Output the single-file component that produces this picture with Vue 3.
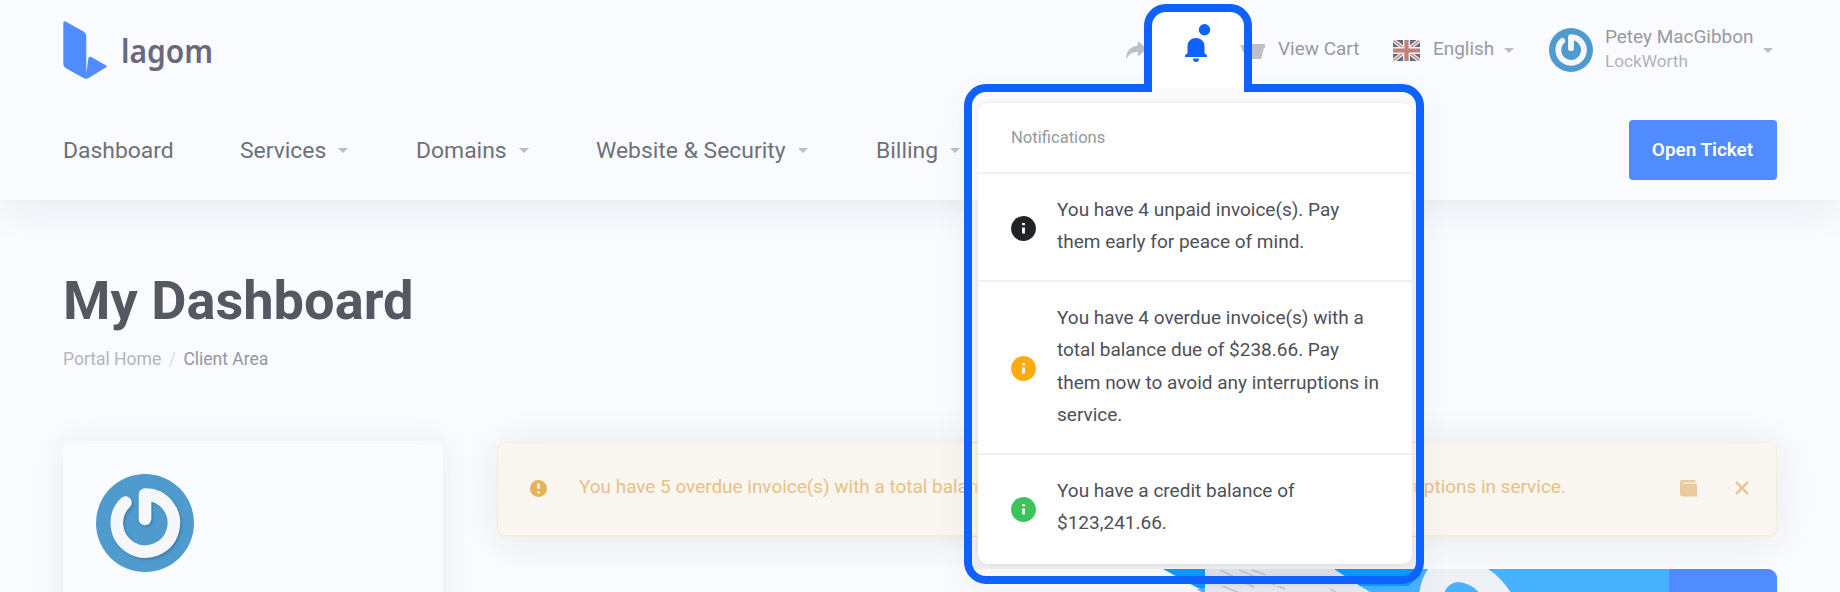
<script setup>
const nav = [
  { label: 'Dashboard', cls: 'n-dash' },
  { label: 'Services', cls: 'n-serv', caret: true },
  { label: 'Domains', cls: 'n-dom', caret: true },
  { label: 'Website & Security', cls: 'n-web', caret: true },
  { label: 'Billing', cls: 'n-bill', caret: true },
]
const notes = [
  { color: '#212427', lines: ['You have 4 unpaid invoice(s). Pay', 'them early for peace of mind.'] },
  { color: '#ffab0d', lines: ['You have 4 overdue invoice(s) with a', 'total balance due of $238.66. Pay', 'them now to avoid any interruptions in', 'service.'] },
  { color: '#3dc35c', lines: ['You have a credit balance of', '$123,241.66.'] },
]
</script>

<template>
  <div class="page">
    <header class="header">
      <div class="top">
        <svg class="logo" width="160" height="72" viewBox="60 14 160 72">
          <path fill="#508bff" d="M63.3 23.5Q63.3 20.3 66 21.8L83.500 31.500Q86.300 33.200 86.300 36V73.500L88.300 58.500Q88.800 55.700 91.200 57.100L105.800 65.200Q107.800 66.300 105.800 67.600L88.500 78Q86 79.400 83.500 78L65.500 68Q63.300 66.600 63.300 64Z" />
          <text x="121" y="62.500" class="logo-text" textLength="92" lengthAdjust="spacingAndGlyphs">lagom</text>
        </svg>
        <div class="tools">
          <svg class="share" width="22" height="20" viewBox="0 0 22 20"><path fill="#bcc0c8" d="M12 1 21 9 12 16.500V12C6 12 3 14.500 0 19 0 11 5 6 12 5.500Z" /></svg>
          <svg class="cart" width="25" height="24" viewBox="0 0 25 24"><path fill="#bcc0c8" d="M0 6H4V1H6V6H25V10H24L21 21H5L2 10H0Z" /></svg>
          <span class="t16 view">View Cart</span>
          <svg class="flag" width="27" height="21" viewBox="0 0 27 21">
            <defs><clipPath id="flagclip"><rect width="27" height="21" rx="3" /></clipPath></defs>
            <g clip-path="url(#flagclip)">
              <rect width="27" height="21" fill="#5f6c92" />
              <path d="M0 0 27 21M27 0 0 21" stroke="#f4f0f2" stroke-width="4" />
              <path d="M0 0 27 21M27 0 0 21" stroke="#c98679" stroke-width="1.400" />
              <path d="M13.500 0V21M0 10.500H27" stroke="#f4f0f2" stroke-width="7" />
              <path d="M13.500 0V21M0 10.500H27" stroke="#c18278" stroke-width="4.200" />
            </g>
          </svg>
          <span class="t16 lang">English</span>
          <i class="caret"></i>
          <svg class="avatar-s" width="44" height="44" viewBox="0 0 98 98">
            <circle cx="49" cy="49" r="49" fill="#4f9bce" />
            <path d="M29.500 28.500A28.500 28.500 0 1 0 49 20.500V45" fill="none" stroke="#f5f7fb" stroke-width="13" stroke-linecap="round" stroke-linejoin="round" />
          </svg>
          <div class="who"><span class="t16 name">Petey MacGibbon</span><span class="company">LockWorth</span></div>
          <i class="caret"></i>
        </div>
      </div>
      <nav class="nav">
        <a v-for="n in nav" :key="n.label" :class="['nav-item', n.cls]"><span>{{ n.label }}</span><i v-if="n.caret" class="caret"></i></a>
        <button class="ticket">Open Ticket</button>
      </nav>
    </header>

    <main class="main">
      <h1>My Dashboard</h1>
      <div class="crumbs"><span>Portal Home</span><span class="slash">/</span><span class="here">Client Area</span></div>
      <div class="cols">
        <section class="profile">
          <svg width="98" height="98" viewBox="0 0 98 98">
            <defs>
              <filter id="soft" x="-20%" y="-20%" width="140%" height="140%"><feDropShadow dx="1.500" dy="1.500" stdDeviation="1.200" flood-color="#28567a" flood-opacity=".45" /></filter>
            </defs>
            <circle cx="49" cy="49" r="49" fill="#4f9bce" />
            <path filter="url(#soft)" d="M29.500 28.500A28.500 28.500 0 1 0 49 20.500V45" fill="none" stroke="#f5f7fb" stroke-width="12.500" stroke-linecap="round" stroke-linejoin="round" />
          </svg>
        </section>
        <div class="right">
          <section class="alert">
            <svg class="warn" width="17" height="17" viewBox="0 0 17 17"><circle cx="8.500" cy="8.500" r="8.500" fill="#e5b45a" /><path d="M8.500 3.500V8.800M8.500 11.200V13.500" stroke="#faf6f1" stroke-width="2.400" /></svg>
            <span class="alert-text">You have 5 overdue invoice(s) with a total balance due of $238.66. Pay them now to avoid any interruptions in service.</span>
            <svg class="wallet" width="17" height="17" viewBox="0 0 17 17"><path fill="#ebcb9c" d="M2.500 0H15.500V2.500H3V3.700H17V16.500H2.500Q0 16.500 0 14V2.500Q0 0 2.500 0Z" /></svg>
            <svg class="close" width="14" height="14" viewBox="0 0 14 14"><path d="M1 1 13 13M13 1 1 13" stroke="#e8c896" stroke-width="2.500" /></svg>
          </section>
          <section class="banner">
            <svg width="1280" height="40" viewBox="497 569 1280 40">
              <rect x="1205" y="569" width="160" height="40" fill="#e8edf4" />
              <path d="M1163 569H1205V594Z" fill="#48b2ff" />
              <path d="M1334 569H1669V609H1396Z" fill="#48b2ff" />
              <rect x="1669" y="569" width="120" height="40" fill="#508bff" />
              <path d="M1220 570 1254 587M1239 570 1285 589M1220 585 1242 594M1256 570 1270 575M1330 589 1337 593" stroke="#c9cdd4" stroke-width="2" />
              <path d="M1419 594Q1421 579 1428 569H1488Q1500 576 1512 594H1480Q1472 583 1458 582 1447 583 1444 594Z" fill="#edf0f5" />
            </svg>
          </section>
        </div>
      </div>
    </main>

    <div class="glow"></div>
    <svg class="inside" width="1840" height="592" viewBox="0 0 1840 592">
      <path d="M1148 94V26A18 18 0 0 1 1166 8H1230A18 18 0 0 1 1248 26V94Z" fill="#fff" />
      <path d="M1240 45H1246V55L1243 52Z" fill="#c4c7cd" />
      <path d="M968 106A18 18 0 0 1 986 88H1402A18 18 0 0 1 1420 106V200H968Z" fill="#fafafb" />
      <path d="M968 200H1420V442H968Z" fill="#f0f1f3" />
      <path d="M968 442H1420V537H968Z" fill="#f5ecc8" fill-opacity=".4" />
      <path d="M968 537H1420V569H968Z" fill="#ececee" />
      <path d="M968 442.500H978M1412 442.500H1420M968 536.500H978M1412 536.500H1420" stroke="#eed9ae" />
      <path d="M968 569H1163L1200 589H986Z" fill="#f8f8f9" />
      <path d="M1163 569H1205V588H1198Z" fill="#0c98f9" />
      <rect x="1205" y="569" width="150" height="17" fill="#dadde1" />
      <path d="M1334 569H1420V576L1408 586H1360Z" fill="#0c98f9" />
      <path d="M1220 570 1254 587M1239 570 1275 585M1252 570 1266 575" stroke="#bdc0c4" stroke-width="1.600" />
    </svg>

    <section class="popup">
      <h2>Notifications</h2>
      <div v-for="(n, i) in notes" :key="i" class="note">
        <svg width="25" height="25" viewBox="0 0 25 25"><circle cx="12.500" cy="12.500" r="12.400" :fill="n.color" /><path d="M12.500 7V9.300M12.500 11.500V17.500" stroke="#fff" stroke-width="2.800" /></svg>
        <p><span v-for="l in n.lines" :key="l">{{ l }}</span></p>
      </div>
    </section>

    <svg class="frame" width="1840" height="592" viewBox="0 0 1840 592">
      <path d="M1148 88V26A18 18 0 0 1 1166 8H1230A18 18 0 0 1 1248 26V88H1402A18 18 0 0 1 1420 106V562A18 18 0 0 1 1402 580H986A18 18 0 0 1 968 562V106A18 18 0 0 1 986 88Z" fill="none" stroke="#0f62fe" stroke-width="8" />
      <circle cx="1204.500" cy="29.700" r="5.700" fill="#0f62fe" />
      <path d="M1185 57V55.500L1187.500 53V46.500C1187.500 41 1191.500 38 1196 38S1204.500 41 1204.500 46.500V53L1207 55.500V57ZM1193 58.500H1199A3 3.500 0 0 1 1193 58.500Z" fill="#0f62fe" />
    </svg>
  </div>
</template>

<style>
body { margin: 0; overflow: hidden; }
</style>
<style scoped>
.page { position: relative; width: 1840px; height: 592px; overflow: hidden; background: #fafbff; font-family: Roboto, "Liberation Sans", sans-serif; color: #6d7178; }
svg { display: block; flex: none; }
.header { height: 200px; box-sizing: border-box; position: relative; background: #fafbff; box-shadow: 0 0 44px rgba(40, 45, 60, .11); }
.top { display: flex; justify-content: space-between; height: 100px; padding: 0 67px 0 60px; }
.logo { margin-top: 14px; overflow: visible; }
.logo-text { font-family: "Noto Sans", "Open Sans", sans-serif; font-weight: 600; font-size: 33px; fill: #6a6879; }
.tools { display: flex; align-items: center; height: 100px; }
.share { margin-right: 92px; }
.cart { margin-right: 13px; }
.t16 { font-size: 18.950px; line-height: 22px; color: #979a9f; white-space: nowrap; }
.view { width: 115px; margin-bottom: 2px; }
.lang { width: 71px; margin-bottom: 2px; }
.flag { margin-right: 13px; }
.caret { display: block; flex: none; width: 0; height: 0; border: 5px solid transparent; border-top: 5px solid #babdc4; border-bottom: 0; }
.avatar-s { margin: 0 12px 0 35px; }
.who { display: flex; flex-direction: column; width: 158px; }
.company { font-size: 17.200px; line-height: 26px; color: #b0b3b8; }
.nav { display: flex; align-items: center; height: 100px; padding: 0 63px; }
.nav-item { display: flex; align-items: center; gap: 12px; font-size: 22.900px; white-space: nowrap; }
.n-dash { width: 177px; } .n-serv { width: 176px; } .n-dom { width: 180px; } .n-web { width: 280px; }
.ticket { margin-left: auto; width: 148px; height: 60px; border: 0; border-radius: 4px; background: #508bff; color: #fff; font: 600 18.900px Roboto, sans-serif; padding: 0 1px 2px 0; }
.main { padding: 0 63px; }
h1 { margin: 69px 0 0; font-size: 54.200px; line-height: 64px; font-weight: 700; color: #555861; }
.crumbs { display: flex; margin-top: 13px; font-size: 17.500px; line-height: 26px; color: #b2b5ba; }
.slash { margin: 0 7.500px; color: #dcdee2; }
.here { color: #94979d; }
.cols { display: flex; margin-top: 69px; gap: 54px; }
.profile { width: 380px; height: 200px; border-radius: 9px; box-sizing: border-box; padding: 33px; background: #fafbff; box-shadow: 0 2px 32px rgba(40, 45, 60, .08); }
.right { width: 1280px; }
.alert { height: 95px; margin-top: 1px; box-sizing: border-box; border: 1px solid #f8edd8; border-bottom-width: 2px; border-radius: 8px; background: #f9f5f1; display: flex; align-items: center; padding: 0 27px 2px 32px; box-shadow: 0 4px 40px rgba(40, 45, 60, .09); }
.alert-text { flex: 1; margin: 0 0 3px 32px; font-size: 18.970px; color: #e8c283; white-space: nowrap; }
.wallet { margin-right: 38px; }
.banner { height: 60px; margin-top: 32px; border-radius: 9px; overflow: hidden; background: #fafbff; position: relative; }
.glow { position: absolute; left: 964px; top: 84px; width: 460px; height: 500px; border-radius: 20px; box-shadow: 0 8px 30px rgba(60, 65, 80, .06); }
.inside, .frame { position: absolute; left: 0; top: 0; }
.popup { position: absolute; left: 978px; top: 103px; width: 434px; height: 461px; border-radius: 10px; background: #fff; box-shadow: 0 0 5px rgba(0, 0, 0, .06); }
h2 { margin: 0; height: 69px; box-sizing: border-box; padding: 22px 33px 0; font-size: 16.600px; line-height: 26px; font-weight: 400; color: #96989e; }
.note { display: flex; align-items: center; box-sizing: border-box; border-top: 2px solid #eff0f2; padding: 20px 33px 21.300px; gap: 21px; }
.note svg { margin-top: 4px; }
.note p { margin: 0; display: flex; flex-direction: column; font-size: 19px; line-height: 32.350px; color: #4e5058; white-space: nowrap; }
</style>
